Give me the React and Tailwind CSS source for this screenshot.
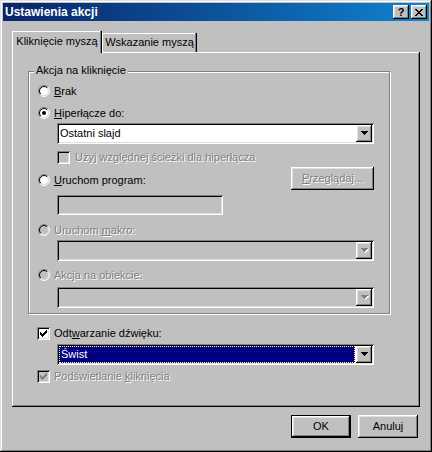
import React from "react";

const SUNKEN =
  "shadow-[inset_1px_1px_0_#808080,inset_-1px_-1px_0_#ffffff,inset_2px_2px_0_#000000,inset_-2px_-2px_0_#dfdfdf]";
const RAISED =
  "shadow-[inset_-1px_-1px_0_#000000,inset_1px_1px_0_#ffffff,inset_-2px_-2px_0_#808080,inset_2px_2px_0_#dfdfdf]";
const DIS = "text-[#808080] [text-shadow:1px_1px_0_#ffffff]";
const U = "underline decoration-1 underline-offset-[1px]";

function Radio({ checked, disabled }) {
  return (
    <svg width="12" height="12" viewBox="0 0 12 12" className="shrink-0 block">
      <circle cx="6" cy="6" r="4.5" fill={disabled ? "#c0c0c0" : "#ffffff"} />
      <path d="M2.111 9.889A5.5 5.5 0 0 1 9.889 2.111" stroke="#808080" fill="none" />
      <path d="M9.889 2.111A5.5 5.5 0 0 1 2.111 9.889" stroke="#ffffff" fill="none" />
      <path d="M2.818 9.182A4.5 4.5 0 0 1 9.182 2.818" stroke="#000000" fill="none" />
      <path d="M9.182 2.818A4.5 4.5 0 0 1 2.818 9.182" stroke="#dfdfdf" fill="none" />
      {checked && <circle cx="6" cy="6" r="2" fill="#000000" />}
    </svg>
  );
}

function Checkbox({ checked, disabled }) {
  return (
    <span
      className={`relative block w-[13px] h-[13px] shrink-0 ${
        disabled ? "bg-[#c0c0c0]" : "bg-white"
      } ${SUNKEN}`}
    >
      {checked && (
        <svg width="7" height="7" viewBox="0 0 7 7" className="absolute left-[3px] top-[3px]">
          <path
            fill={disabled ? "#808080" : "#000000"}
            d="M0 2h1v3H0z M1 3h1v3H1z M2 4h1v3H2z M3 3h1v3H3z M4 2h1v3H4z M5 1h1v3H5z M6 0h1v3H6z"
          />
        </svg>
      )}
    </span>
  );
}

function Arrow({ disabled }) {
  const d = "M0 0h7v1H0z M1 1h5v1H1z M2 2h3v1H2z M3 3h1v1H3z";
  return disabled ? (
    <svg width="8" height="5" viewBox="0 0 8 5" className="block">
      <path d={d} fill="#ffffff" transform="translate(1 1)" />
      <path d={d} fill="#808080" />
    </svg>
  ) : (
    <svg width="7" height="4" viewBox="0 0 7 4" className="block">
      <path d={d} fill="#000000" />
    </svg>
  );
}

function Combo({ children, disabled, className = "" }) {
  return (
    <div
      className={`flex shrink-0 h-[21px] w-[317px] p-[2px] ${
        disabled ? "bg-[#c0c0c0]" : "bg-white"
      } ${SUNKEN} ${className}`}
    >
      <div className="flex-1 min-w-0 mr-[1px] flex">{children}</div>
      <div className={`w-[16px] h-[17px] shrink-0 bg-[#c0c0c0] pl-[5px] pt-[6px] ${RAISED}`}>
        <Arrow disabled={disabled} />
      </div>
    </div>
  );
}

export default function App() {
  return (
    <div className="w-[432px] h-[452px] bg-[#c0c0c0] p-[3px] font-['Liberation_Sans',Arial,sans-serif] text-[11px] leading-[13px] text-black select-none shadow-[inset_-1px_-1px_0_#000000,inset_1px_1px_0_#dfdfdf,inset_-2px_-2px_0_#808080,inset_2px_2px_0_#ffffff]">
      {/* Title bar */}
      <div className="h-[18px] flex items-center pl-[2px] pr-[2px] bg-linear-to-r from-[#0a246a] to-[#1084d0]">
        <span className="flex-1 text-white font-bold text-[12px] leading-[14px]">
          Ustawienia akcji
        </span>
        <div className="flex gap-[2px]">
          <div
            className={`w-[16px] h-[14px] bg-[#c0c0c0] ${RAISED} flex items-center justify-center font-bold text-[11px] leading-[11px]`}
          >
            ?
          </div>
          <div className={`w-[16px] h-[14px] bg-[#c0c0c0] ${RAISED} flex items-center justify-center`}>
            <svg width="8" height="7" viewBox="0 0 8 7" className="block">
              <path
                fill="#000000"
                d="M0 0h2v1H0z M6 0h2v1H6z M1 1h2v1H1z M5 1h2v1H5z M2 2h4v1H2z M3 3h2v1H3z M2 4h4v1H2z M1 5h2v1H1z M5 5h2v1H5z M0 6h2v1H0z M6 6h2v1H6z"
              />
            </svg>
          </div>
        </div>
      </div>

      <div className="px-[9px]">
        {/* Tabs */}
        <div className="mt-[10px] h-[21px] flex items-end">
          <div className="relative z-10 -mb-px h-[22px] w-[90px] bg-[#c0c0c0] flex items-center justify-center pb-[1px] shadow-[inset_-1px_0_0_#000000,inset_-2px_0_0_#808080,inset_1px_1px_0_#ffffff]">
            Kliknięcie myszą
          </div>
          <div className="h-[19px] w-[95px] flex items-center justify-center shadow-[inset_-1px_0_0_#000000,inset_-2px_0_0_#808080,inset_1px_1px_0_#ffffff]">
            Wskazanie myszą
          </div>
        </div>

        {/* Tab panel */}
        <div className="h-[355px] pl-[16px] pt-[19px] flex flex-col items-start shadow-[inset_-1px_-1px_0_#000000,inset_1px_1px_0_#ffffff,inset_-2px_-2px_0_#808080]">
          {/* Group box */}
          <div className="relative w-[362px] h-[243px] shrink-0 border border-[#808080] shadow-[1px_1px_0_#ffffff,inset_1px_1px_0_#ffffff] pl-[9px] pt-[11px] flex flex-col items-start">
            <span className="absolute left-[5px] -top-[8px] px-[2px] bg-[#c0c0c0]">
              Akcja na kliknięcie
            </span>

            <div className="h-[16px] flex items-center gap-[4px]">
              <Radio />
              <span>
                <span className={U}>B</span>rak
              </span>
            </div>

            <div className="mt-[6px] h-[16px] flex items-center gap-[4px]">
              <Radio checked />
              <span>
                <span className={U}>H</span>iperłącze do:
              </span>
            </div>

            <Combo className="mt-[2px] ml-[19px]">
              <span className="pl-[1px] flex items-center">Ostatni slajd</span>
            </Combo>

            <div className="mt-[5px] ml-[19px] h-[16px] flex items-center gap-[5px]">
              <Checkbox disabled />
              <span className={DIS}>Użyj względnej ścieżki dla hiperłącza</span>
            </div>

            <div className="mt-[2px] w-[336px] h-[23px] flex items-start justify-between">
              <div className="mt-[5px] h-[16px] flex items-center gap-[4px]">
                <Radio />
                <span>
                  <span className={U}>U</span>ruchom program:
                </span>
              </div>
              <div className={`w-[83px] h-[23px] flex items-center justify-center ${RAISED} ${DIS}`}>
                <span>
                  <span className={U}>P</span>rzeglądaj...
                </span>
              </div>
            </div>

            <div className={`mt-[5px] ml-[19px] w-[166px] h-[20px] shrink-0 bg-[#c0c0c0] ${SUNKEN}`} />

            <div className="mt-[7px] h-[16px] flex items-center gap-[4px]">
              <Radio disabled />
              <span className={DIS}>
                Uruchom <span className={U}>m</span>akro:
              </span>
            </div>

            <Combo disabled className="mt-[2px] ml-[19px]" />

            <div className="mt-[6px] h-[16px] flex items-center gap-[4px]">
              <Radio disabled />
              <span className={DIS}>Akcja na obiekcie:</span>
            </div>

            <Combo disabled className="mt-[4px] ml-[19px]" />
          </div>

          {/* Sound */}
          <div className="mt-[11px] ml-[9px] h-[16px] flex items-center gap-[4px]">
            <Checkbox checked />
            <span>
              Odt<span className={U}>w</span>arzanie dźwięku:
            </span>
          </div>

          <Combo className="mt-[3px] ml-[29px]">
            <div className="flex-1 bg-[#000080] border border-dotted border-[#ffff99] text-white flex items-center pl-[1px]">
              Świst
            </div>
          </Combo>

          <div className="mt-[3px] ml-[9px] h-[16px] flex items-center gap-[4px]">
            <Checkbox checked disabled />
            <span className={DIS}>
              Podświetlanie <span className={U}>k</span>liknięcia
            </span>
          </div>
        </div>

        {/* Buttons */}
        <div className="mt-[8px] flex justify-end gap-[7px] pr-[2px]">
          <div className="w-[60px] h-[23px] border border-black">
            <div className={`w-full h-full flex items-center justify-center ${RAISED}`}>OK</div>
          </div>
          <div className={`w-[60px] h-[23px] flex items-center justify-center ${RAISED}`}>Anuluj</div>
        </div>
      </div>
    </div>
  );
}
